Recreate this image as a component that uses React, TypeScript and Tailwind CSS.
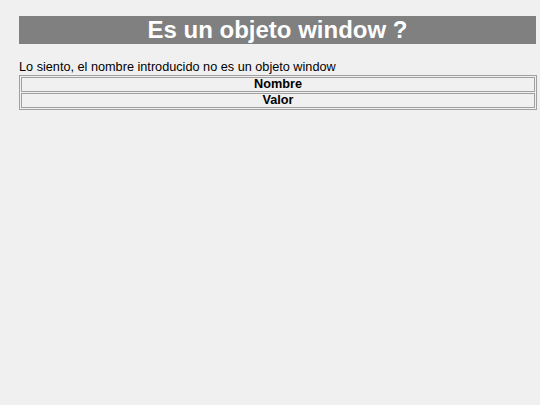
export default function App() {
  return (
    <div className="min-h-[405px] w-[540px] bg-[#f0f0f0] pt-[16px] font-['Liberation_Sans',Arial,sans-serif] text-black">
      <div className="ml-[19px] mr-[4px] flex h-[28px] items-center justify-center bg-[#808080] text-[24px] font-bold leading-none text-white">
        Es un objeto window ?
      </div>
      <div className="mx-[19px] mt-[16px] text-[12.7px] leading-[15px]">
        Lo siento, el nombre introducido no es un objeto window
      </div>
      <div className="ml-[19px] mr-[3px] flex flex-col gap-[1px] border border-[#a0a0a0] p-[1px]">
        <div className="flex h-[15px] items-center justify-center border border-[#a0a0a0] text-[12.7px] font-bold leading-none">
          Nombre
        </div>
        <div className="flex h-[15px] items-center justify-center border border-[#a0a0a0] text-[12.7px] font-bold leading-none">
          Valor
        </div>
      </div>
    </div>
  );
}
